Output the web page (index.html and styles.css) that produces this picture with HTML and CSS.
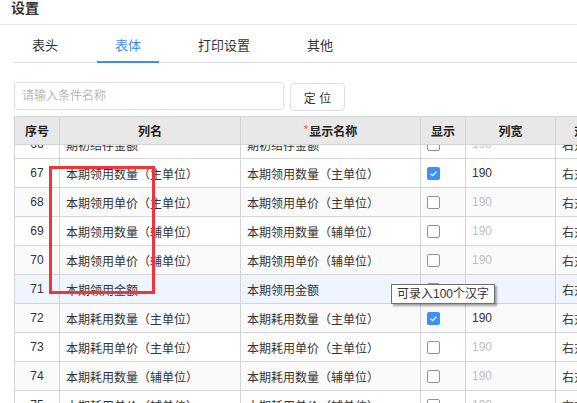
FILE: index.html
```html
<!DOCTYPE html>
<html lang="zh-CN">
<head>
<meta charset="utf-8">
<title>设置</title>
<link rel="stylesheet" href="styles.css">
</head>
<body>
<div class="page">
  <div class="title">设置</div>
  <div class="content">
    <div class="tabs">
      <div class="tab">表头</div>
      <div class="tab active">表体</div>
      <div class="tab">打印设置</div>
      <div class="tab">其他</div>
    </div>
    <div class="search">
      <input class="search-input" type="text" placeholder="请输入条件名称">
      <button class="btn">定 位</button>
    </div>
    <div class="grid">
      <div class="row head">
        <div class="cell c">序号</div>
        <div class="cell c">列名</div>
        <div class="cell c"><span class="req">*</span>显示名称</div>
        <div class="cell c">显示</div>
        <div class="cell c">列宽</div>
        <div class="cell c last">对齐方式</div>
      </div>
      <div class="body">
        <div class="body-inner">
          <div class="row">
            <div class="cell c">66</div>
            <div class="cell">期初结存金额</div>
            <div class="cell">期初结存金额</div>
            <div class="cell"><span class="cb"></span></div>
            <div class="cell muted">190</div>
            <div class="cell">右对齐</div>
          </div>
          <div class="row">
            <div class="cell c">67</div>
            <div class="cell">本期领用数量（主单位）</div>
            <div class="cell">本期领用数量（主单位）</div>
            <div class="cell"><span class="cb on"><svg viewBox="0 0 13 13" width="13" height="13"><polyline points="3.5,6.8 5.6,8.7 9.5,4.6" fill="none" stroke="#fff" stroke-width="1.2"/></svg></span></div>
            <div class="cell">190</div>
            <div class="cell">右对齐</div>
          </div>
          <div class="row stripe">
            <div class="cell c">68</div>
            <div class="cell">本期领用单价（主单位）</div>
            <div class="cell">本期领用单价（主单位）</div>
            <div class="cell"><span class="cb"></span></div>
            <div class="cell muted">190</div>
            <div class="cell">右对齐</div>
          </div>
          <div class="row">
            <div class="cell c">69</div>
            <div class="cell">本期领用数量（辅单位）</div>
            <div class="cell">本期领用数量（辅单位）</div>
            <div class="cell"><span class="cb"></span></div>
            <div class="cell muted">190</div>
            <div class="cell">右对齐</div>
          </div>
          <div class="row stripe">
            <div class="cell c">70</div>
            <div class="cell">本期领用单价（辅单位）</div>
            <div class="cell">本期领用单价（辅单位）</div>
            <div class="cell"><span class="cb"></span></div>
            <div class="cell muted">190</div>
            <div class="cell">右对齐</div>
          </div>
          <div class="row hover">
            <div class="cell c">71</div>
            <div class="cell">本期领用金额</div>
            <div class="cell">本期领用金额</div>
            <div class="cell"><span class="cb"></span></div>
            <div class="cell muted">190</div>
            <div class="cell">右对齐</div>
          </div>
          <div class="row stripe">
            <div class="cell c">72</div>
            <div class="cell">本期耗用数量（主单位）</div>
            <div class="cell">本期耗用数量（主单位）</div>
            <div class="cell"><span class="cb on"><svg viewBox="0 0 13 13" width="13" height="13"><polyline points="3.5,6.8 5.6,8.7 9.5,4.6" fill="none" stroke="#fff" stroke-width="1.2"/></svg></span></div>
            <div class="cell">190</div>
            <div class="cell">右对齐</div>
          </div>
          <div class="row">
            <div class="cell c">73</div>
            <div class="cell">本期耗用单价（主单位）</div>
            <div class="cell">本期耗用单价（主单位）</div>
            <div class="cell"><span class="cb"></span></div>
            <div class="cell muted">190</div>
            <div class="cell">右对齐</div>
          </div>
          <div class="row stripe">
            <div class="cell c">74</div>
            <div class="cell">本期耗用数量（辅单位）</div>
            <div class="cell">本期耗用数量（辅单位）</div>
            <div class="cell"><span class="cb"></span></div>
            <div class="cell muted">190</div>
            <div class="cell">右对齐</div>
          </div>
          <div class="row">
            <div class="cell c">75</div>
            <div class="cell">本期耗用单价（辅单位）</div>
            <div class="cell">本期耗用单价（辅单位）</div>
            <div class="cell"><span class="cb"></span></div>
            <div class="cell muted">190</div>
            <div class="cell">右对齐</div>
          </div>
        </div>
      </div>
    </div>
  </div>
  <div class="mark"></div>
  <div class="tip">可录入100个汉字</div>
</div>
</body>
</html>
```
FILE: styles.css
```css
html, body {
  margin: 0;
  padding: 0;
  overflow: hidden;
  background: #fff;
}
body {
  font-family: "Liberation Sans", "Noto Sans CJK SC", sans-serif;
  font-size: 12px;
  color: #333;
}
.page {
  position: relative;
  width: 577px;
  height: 403px;
  overflow: hidden;
}
.title {
  height: 24px;
  line-height: 17px;
  padding-left: 11px;
  font-size: 14px;
  font-weight: bold;
  color: #333;
  border-bottom: 1px solid #e6e6e6;
}
.content {
  padding-left: 14px;
  width: 720px;
}
.tabs {
  display: flex;
  gap: 21px;
  margin-top: 8px;
  border-bottom: 1px solid #dcdcdc;
}
.tab {
  padding: 0 18px;
  height: 28px;
  line-height: 26px;
  font-size: 13px;
  color: #333;
  border-bottom: 2px solid transparent;
  margin-bottom: -1px;
}
.tab.active {
  color: #3f8cf2;
  border-bottom-color: #3f8cf2;
}
.search {
  display: flex;
  gap: 6px;
  margin-top: 19px;
}
.search-input {
  box-sizing: border-box;
  width: 270px;
  height: 28px;
  margin: 0;
  border: 1px solid #dcdfe6;
  border-radius: 3px;
  padding: 0 7px;
  font-family: inherit;
  font-size: 12px;
  outline: none;
}
.search-input::placeholder {
  color: #b8b8b8;
}
.btn {
  box-sizing: border-box;
  width: 55px;
  height: 28px;
  margin: 1px 0 0;
  border: 1px solid #dcdfe6;
  border-radius: 4px;
  background: #fff;
  font-family: inherit;
  font-size: 12px;
  color: #333;
  padding: 0;
}
.grid {
  margin-top: 5px;
  border-left: 1px solid #d4d4d4;
}
.row {
  display: grid;
  grid-template-columns: 45px 181px 180px 45px 90px 100px;
  height: 29px;
}
.row.head {
  border-top: 1px solid #d4d4d4;
  height: 28px;
  background: #e8e8e8;
  font-weight: bold;
  color: #222;
}
.cell {
  box-sizing: border-box;
  display: flex;
  align-items: center;
  padding: 0 6px;
  border-right: 1px solid #d4d4d4;
  border-bottom: 1px solid #d4d4d4;
  white-space: nowrap;
  overflow: hidden;
}
.cell.c {
  justify-content: center;
}
.head .cell.last {
  justify-content: flex-start;
  padding-left: 18px;
}
.req {
  color: #f04a4a;
  font-weight: normal;
  font-size: 11px;
  margin-right: 1px;
  align-self: flex-start;
  margin-top: 6px;
}
.body {
  height: 259px;
  overflow: hidden;
}
.body-inner {
  margin-top: -15px;
}
.row.stripe {
  background: #fafafa;
}
.row.hover {
  background: #eef5fe;
}
.muted {
  color: #c0c0c0;
}
.cb {
  box-sizing: border-box;
  display: block;
  width: 13px;
  height: 13px;
  border: 1px solid #929292;
  border-radius: 2px;
  background: #fff;
}
.cb.on {
  border: none;
  background: #3d8ef5;
}
.cb svg {
  display: block;
}
.mark {
  position: absolute;
  left: 49px;
  top: 166px;
  width: 106px;
  height: 128px;
  box-sizing: border-box;
  border: 3px solid #f0353a;
}
.tip {
  position: absolute;
  left: 391px;
  top: 284px;
  padding: 0 5px;
  height: 18px;
  line-height: 18px;
  font-size: 12px;
  color: #333;
  background: #fff;
  border: 1px solid #6f6f6f;
  box-shadow: 2px 2px 2px rgba(0, 0, 0, 0.35);
  white-space: nowrap;
}
```
